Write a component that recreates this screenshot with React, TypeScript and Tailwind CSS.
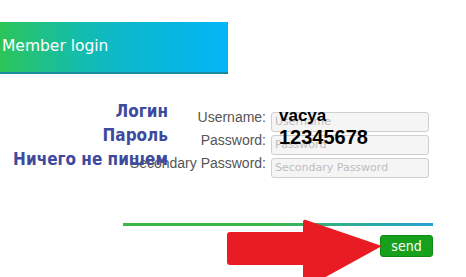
export default function App() {
  const rows = [
    { label: "Username:", placeholder: "Username", typed: "vacya", typedCls: "text-[17px] top-[-1px]" },
    { label: "Password:", placeholder: "Password", typed: "12345678", typedCls: "text-[20px] top-[-3px]" },
    { label: "Secondary Password:", placeholder: "Secondary Password", typed: "", typedCls: "" },
  ];

  return (
    <div className="relative w-[466px] h-[277px] overflow-hidden bg-white">
      {/* Header */}
      <div className="mt-[22px] w-[228px] h-[52px] flex items-center pl-[2px] bg-gradient-to-r from-[#2dc457] via-[#0fb8c8] to-[#05b5f7] border-b-2 border-[#1a8aa0]">
        <span className="text-white text-[15.5px] font-['DejaVu_Sans',sans-serif]">Member login</span>
      </div>

      {/* Form */}
      <div className="mt-[33px] flex flex-col gap-[3px]">
        {rows.map((r) => (
          <div key={r.label} className="flex items-center h-[20px]">
            <label className="w-[266px] text-right text-[14px] leading-[20px] text-[#555] font-['Liberation_Sans',Arial,sans-serif]">
              {r.label}
            </label>
            <div className="relative ml-[5px] w-[158px] h-[20px]">
              <input
                placeholder={r.placeholder}
                className="w-full h-full rounded-[3px] border border-[#cfcfcf] bg-[#f5f5f5] px-[3px] text-[11px] placeholder:text-[#bdbdbd] font-['DejaVu_Sans',sans-serif] outline-none"
              />
              {r.typed && (
                <span className={`absolute left-[8px] leading-[20px] font-bold text-black font-['Liberation_Sans',Arial,sans-serif] ${r.typedCls}`}>
                  {r.typed}
                </span>
              )}
            </div>
          </div>
        ))}
      </div>

      {/* Divider */}
      <div className="mt-[50px] ml-[123px] w-[310px] h-[3px] bg-gradient-to-r from-[#3cb54a] via-[#3cb54a] to-[#2a9fd6]" />

      {/* Send */}
      <button className="mt-[9px] ml-[380px] w-[53px] h-[22px] rounded-[3px] bg-[#17a01b] border border-[#0f8a14] text-white text-[14px] font-['DejaVu_Sans_Condensed','DejaVu_Sans',sans-serif] flex items-center justify-center">
        send
      </button>

      {/* Annotations */}
      <div className="absolute top-[101px] right-[298px] flex flex-col items-end gap-[4px] text-[17px] leading-[20px] font-bold text-[#3d4a9e] font-['DejaVu_Sans_Condensed','DejaVu_Sans',sans-serif] whitespace-nowrap">
        <span>Логин</span>
        <span>Пароль</span>
        <span>Ничего не пишем</span>
      </div>

      {/* Arrow */}
      <svg className="absolute left-0 top-0" width="466" height="277" viewBox="0 0 466 277">
        <path
          d="M230 232 L303 232 L303 222 Q303 219 306 220 L382 246 L322 279 L303 279 L303 265 L230 265 Q227 265 227 262 L227 235 Q227 232 230 232 Z"
          fill="#e91c24"
        />
      </svg>
    </div>
  );
}
